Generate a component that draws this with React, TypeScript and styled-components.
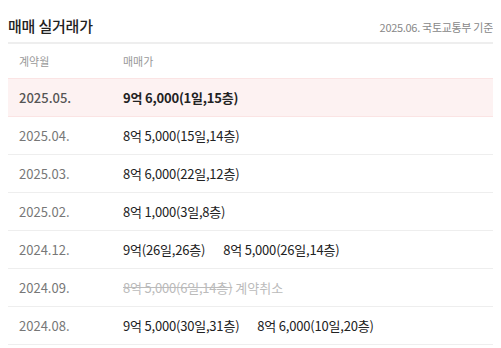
import React from "react";
import styled, { createGlobalStyle } from "styled-components";

const Global = createGlobalStyle`
  body { margin: 8px; background: #fff; font-family: "Noto Sans CJK KR", "Noto Sans", sans-serif; }
`;

const Wrap = styled.div`
  width: 485px;
`;

const Head = styled.div`
  display: flex;
  align-items: center;
  justify-content: space-between;
  height: 33px;
  border-bottom: 2px solid #eeeeee;
  padding-bottom: 1px;
`;

const Title = styled.h2`
  margin: 0;
  font-size: 15px;
  font-weight: 500;
  color: #222;
  letter-spacing: -0.2px;
  padding-top: 2px;
`;

const Source = styled.span`
  font-size: 11px;
  color: #888;
  letter-spacing: -0.3px;
  padding-top: 4px;
`;

const Row = styled.div<{ $hl?: boolean; $header?: boolean }>`
  display: grid;
  grid-template-columns: 104px 1fr;
  align-items: center;
  height: ${(p) => (p.$header ? "34px" : "37px")};
  padding-left: 11px;
  background: ${(p) => (p.$hl ? "#fdf2f2" : "transparent")};
  border-bottom: 1px solid ${(p) => (p.$hl ? "#fbe4e4" : p.$header ? "#f7f7f7" : "#eeeeee")};
  border-top: ${(p) => (p.$hl ? "1px solid #fbe4e4" : "none")};
  margin-top: ${(p) => (p.$hl ? "-1px" : "0")};
`;

const Label = styled.span`
  font-size: 11px;
  color: #999;
`;

const Date = styled.span<{ $bold?: boolean }>`
  font-size: 13px;
  color: ${(p) => (p.$bold ? "#555" : "#777")};
  font-weight: ${(p) => (p.$bold ? 500 : 400)};
`;

const Prices = styled.div`
  display: flex;
  gap: 18px;
  align-items: center;
`;

const Price = styled.span<{ $bold?: boolean; $cancel?: boolean }>`
  font-size: 13px;
  letter-spacing: -0.2px;
  color: ${(p) => (p.$cancel ? "#bbb" : "#222")};
  font-weight: ${(p) => (p.$bold ? 600 : 400)};
  text-decoration: ${(p) => (p.$cancel ? "line-through" : "none")};
`;

const Note = styled.span`
  font-size: 13px;
  color: #bbb;
  margin-left: -15px;
`;

type Item = { date: string; prices: string[]; hl?: boolean; cancel?: boolean };

const data: Item[] = [
  { date: "2025.05.", prices: ["9억 6,000(1일,15층)"], hl: true },
  { date: "2025.04.", prices: ["8억 5,000(15일,14층)"] },
  { date: "2025.03.", prices: ["8억 6,000(22일,12층)"] },
  { date: "2025.02.", prices: ["8억 1,000(3일,8층)"] },
  { date: "2024.12.", prices: ["9억(26일,26층)", "8억 5,000(26일,14층)"] },
  { date: "2024.09.", prices: ["8억 5,000(6일,14층)"], cancel: true },
  { date: "2024.08.", prices: ["9억 5,000(30일,31층)", "8억 6,000(10일,20층)"] },
];

export default function App() {
  return (
    <Wrap>
      <Global />
      <Head>
        <Title>매매 실거래가</Title>
        <Source>2025.06. 국토교통부 기준</Source>
      </Head>
      <Row $header>
        <Label>계약월</Label>
        <Label>매매가</Label>
      </Row>
      {data.map((d) => (
        <Row key={d.date} $hl={d.hl}>
          <Date $bold={d.hl}>{d.date}</Date>
          <Prices>
            {d.prices.map((p) => (
              <Price key={p} $bold={d.hl} $cancel={d.cancel}>
                {p}
              </Price>
            ))}
            {d.cancel && <Note>계약취소</Note>}
          </Prices>
        </Row>
      ))}
    </Wrap>
  );
}
